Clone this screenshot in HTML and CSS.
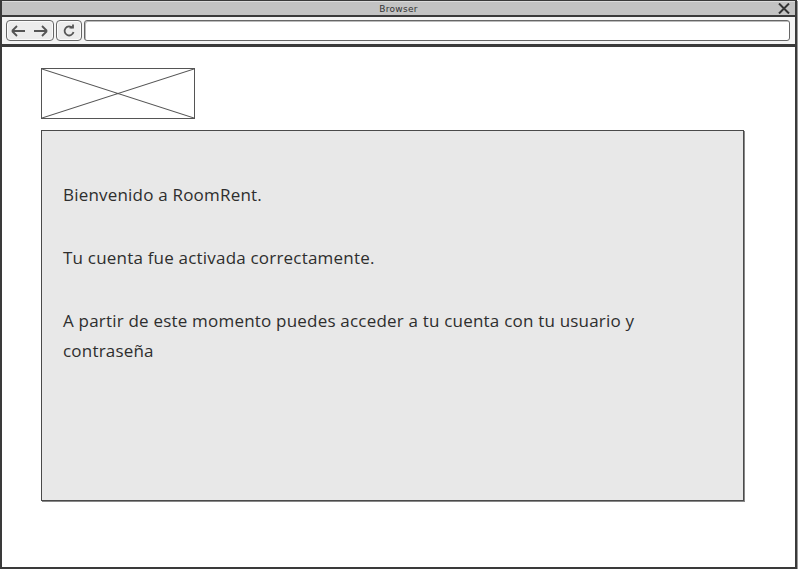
FILE: index.html
```html
<!DOCTYPE html>
<html lang="es">
<head>
<meta charset="utf-8">
<title>Browser</title>
<link rel="stylesheet" href="styles.css">
</head>
<body>
<div class="frame">
  <div class="titlebar">
    <span class="title">Browser</span>
    <svg class="close" width="12" height="11" viewBox="0 0 12 11"><path d="M1 0.5 L11 10.5 M11 0.5 L1 10.5" stroke="#333" stroke-width="2" fill="none"/></svg>
  </div>
  <div class="toolbar">
    <div class="btn navbtn">
      <svg width="40" height="14" viewBox="0 0 40 14"><path d="M2 7 H15 M2 7 L7 2 M2 7 L7 12" stroke="#555" stroke-width="1.8" fill="none"/><path d="M24 7 H37 M37 7 L32 2 M37 7 L32 12" stroke="#555" stroke-width="1.8" fill="none"/></svg>
    </div>
    <div class="btn refbtn">
      <svg width="14" height="14" viewBox="0 0 14 14"><path d="M10.5 4 A4.5 4.5 0 1 0 11.5 8" stroke="#555" stroke-width="1.8" fill="none"/><path d="M7.5 3.5 H11 V0.5" stroke="#555" stroke-width="1.8" fill="none"/></svg>
    </div>
    <div class="address"></div>
  </div>
  <div class="content">
    <div class="logo">
      <svg width="151" height="48" viewBox="0 0 151 48" preserveAspectRatio="none"><path d="M0 0 L151 48 M151 0 L0 48" stroke="#555" stroke-width="1" fill="none"/></svg>
    </div>
    <div class="panel">
      <p>Bienvenido a RoomRent.</p>
      <p>Tu cuenta fue activada correctamente.</p>
      <p>A partir de este momento puedes acceder a tu cuenta con tu usuario y contraseña</p>
    </div>
  </div>
</div>
</body>
</html>
```
FILE: styles.css
```css
html, body {
  margin: 0;
  padding: 0;
  background: #ffffff;
}
.frame {
  width: 797px;
  height: 569px;
  box-sizing: border-box;
  border: 2px solid #3a3a3a;
  display: flex;
  flex-direction: column;
  background: #ffffff;
  box-shadow: 1px 1px 0 #9a9a9a;
}
.titlebar {
  height: 13px;
  background: #c3c3c3;
  border-top: 1px solid #dcdcdc;
  border-bottom: 2px solid #3a3a3a;
  box-sizing: content-box;
  margin-top: -1px;
  display: flex;
  align-items: center;
  justify-content: center;
  position: relative;
}
.title {
  font-family: "DejaVu Sans", sans-serif;
  font-size: 9px;
  color: #333;
  letter-spacing: 0.3px;
}
.close {
  position: absolute;
  right: 5px;
  top: 1px;
}
.toolbar {
  height: 27px;
  background: #f4f4f4;
  border-bottom: 3px solid #3a3a3a;
  display: flex;
  align-items: center;
  padding: 0 5px 0 4px;
  gap: 2px;
}
.btn {
  height: 21px;
  box-sizing: border-box;
  border: 1px solid #666;
  border-radius: 4px;
  background: #ececec;
  box-shadow: inset 0 0 0 1px #fafafa;
  display: flex;
  align-items: center;
  justify-content: center;
}
.navbtn {
  width: 48px;
}
.refbtn {
  width: 26px;
}
.address {
  flex: 1;
  height: 21px;
  box-sizing: border-box;
  border: 1px solid #666;
  border-radius: 3px;
  background: #ffffff;
  box-shadow: inset 1px 1px 0 #bbb;
}
.content {
  flex: 1;
  padding: 21px 0 0 39px;
  display: flex;
  flex-direction: column;
  gap: 11px;
}
.logo {
  width: 154px;
  height: 51px;
  box-sizing: border-box;
  border: 1px solid #555;
  background: #fff;
}
.logo svg {
  display: block;
  width: 152px;
  height: 49px;
}
.panel {
  width: 703px;
  height: 371px;
  box-sizing: border-box;
  border: 1px solid #4a4a4a;
  box-shadow: 1px 1px 0 #888;
  background: #e8e8e8;
  padding: 49px 60px 0 21px;
  font-family: "Open Sans", sans-serif;
  font-size: 17px;
  letter-spacing: 0.2px;
  color: #2e2e2e;
}
.panel p {
  margin: 0 0 33px 0;
  line-height: 30px;
}
```
